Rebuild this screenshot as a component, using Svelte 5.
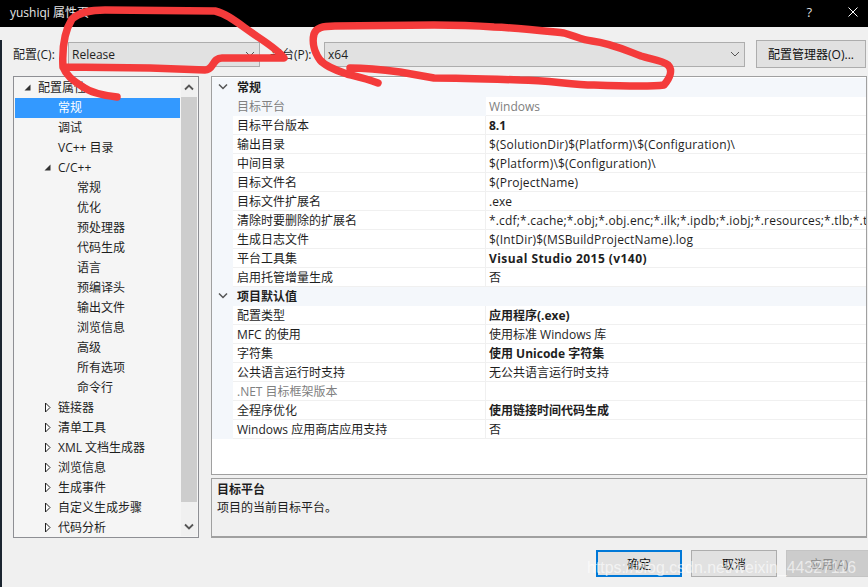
<script>
  const tree = [
    { label: "配置属性", level: 0, icon: "open" },
    { label: "常规", level: 1, selected: true },
    { label: "调试", level: 1 },
    { label: "VC++ 目录", level: 1 },
    { label: "C/C++", level: 1, icon: "open" },
    { label: "常规", level: 2 },
    { label: "优化", level: 2 },
    { label: "预处理器", level: 2 },
    { label: "代码生成", level: 2 },
    { label: "语言", level: 2 },
    { label: "预编译头", level: 2 },
    { label: "输出文件", level: 2 },
    { label: "浏览信息", level: 2 },
    { label: "高级", level: 2 },
    { label: "所有选项", level: 2 },
    { label: "命令行", level: 2 },
    { label: "链接器", level: 1, icon: "closed" },
    { label: "清单工具", level: 1, icon: "closed" },
    { label: "XML 文档生成器", level: 1, icon: "closed" },
    { label: "浏览信息", level: 1, icon: "closed" },
    { label: "生成事件", level: 1, icon: "closed" },
    { label: "自定义生成步骤", level: 1, icon: "closed" },
    { label: "代码分析", level: 1, icon: "closed" }
  ];

  const groups = [
    {
      title: "常规",
      rows: [
        { name: "目标平台", value: "Windows", muted: true },
        { name: "目标平台版本", value: "8.1", bold: true },
        { name: "输出目录", value: "$(SolutionDir)$(Platform)\\$(Configuration)\\", wide: true },
        { name: "中间目录", value: "$(Platform)\\$(Configuration)\\", wide: true },
        { name: "目标文件名", value: "$(ProjectName)", wide: true },
        { name: "目标文件扩展名", value: ".exe" },
        { name: "清除时要删除的扩展名", value: "*.cdf;*.cache;*.obj;*.obj.enc;*.ilk;*.ipdb;*.iobj;*.resources;*.tlb;*.tli;*.t", wide: true },
        { name: "生成日志文件", value: "$(IntDir)$(MSBuildProjectName).log", wide: true },
        { name: "平台工具集", value: "Visual Studio 2015 (v140)", bold: true, wider: true },
        { name: "启用托管增量生成", value: "否" }
      ]
    },
    {
      title: "项目默认值",
      rows: [
        { name: "配置类型", value: "应用程序(.exe)", bold: true },
        { name: "MFC 的使用", value: "使用标准 Windows 库" },
        { name: "字符集", value: "使用 Unicode 字符集", bold: true },
        { name: "公共语言运行时支持", value: "无公共语言运行时支持" },
        { name: ".NET 目标框架版本", value: "", mutedName: true },
        { name: "全程序优化", value: "使用链接时间代码生成", bold: true },
        { name: "Windows 应用商店应用支持", value: "否" }
      ]
    }
  ];
</script>

<div class="window">
  <header class="titlebar">
    <span class="title">yushiqi 属性页</span>
    <span class="help">?</span>
    <svg class="close" width="10" height="10" viewBox="0 0 10 10">
      <path d="M.5.5l9 9M9.500.5l-9 9" stroke="#fff" fill="none" />
    </svg>
  </header>

  <div class="content">
    <div class="toolbar">
      <span class="label first">配置(C):</span>
      <div class="combo config">
        <span>Release</span>
        <svg width="10" height="6" viewBox="0 0 10 6"><path d="M1 1l4 4 4-4" stroke="#555" fill="none" /></svg>
      </div>
      <span class="label second">平台(P):</span>
      <div class="combo platform">
        <span>x64</span>
        <svg width="10" height="6" viewBox="0 0 10 6"><path d="M1 1l4 4 4-4" stroke="#555" fill="none" /></svg>
      </div>
      <button class="btn manager">配置管理器(O)...</button>
    </div>

    <div class="main">
      <nav class="tree">
        <div class="tree-list">
          {#each tree as item}
            <div class="node level{item.level}" class:selected={item.selected}>
              {#if item.icon === "open"}
                <svg class="arrow" width="7" height="7" viewBox="0 0 7 7"><path d="M6.5.5v6h-6z" fill="#333" /></svg>
              {:else if item.icon === "closed"}
                <svg class="arrow" width="7" height="11" viewBox="0 0 7 11"><path d="M1.5 1l4.5 4.500-4.500 4.500z" stroke="#222" fill="#fff" /></svg>
              {/if}
              <span>{item.label}</span>
            </div>
          {/each}
        </div>
        <div class="scrollbar">
          <svg width="10" height="7" viewBox="0 0 10 7"><path d="M1 5.500l4-4 4 4" stroke="#555" stroke-width="1.800" fill="none" /></svg>
          <div class="track"><div class="thumb"></div></div>
          <svg width="10" height="7" viewBox="0 0 10 7"><path d="M1 1.500l4 4 4-4" stroke="#555" stroke-width="1.800" fill="none" /></svg>
        </div>
      </nav>

      <div class="side">
        <section class="grid">
          {#each groups as group}
            <div class="group-head">
              <svg width="10" height="7" viewBox="0 0 10 7"><path d="M1 1.500l4 4 4-4" stroke="#555" stroke-width="1.500" fill="none" /></svg>
              <b>{group.title}</b>
            </div>
            {#each group.rows as row}
              <div class="row" class:muted={row.muted}>
                <div class="name" class:grey={row.mutedName}>{row.name}</div>
                <div class="value" class:strong={row.bold} class:wide={row.wide} class:wider={row.wider}>{row.value}</div>
              </div>
            {/each}
          {/each}
        </section>

        <section class="desc">
          <b>目标平台</b>
          <span>项目的当前目标平台。</span>
        </section>
      </div>
    </div>

    <footer class="actions">
      <button class="btn ok">确定</button>
      <button class="btn">取消</button>
      <button class="btn disabled">应用(A)</button>
    </footer>
  </div>

  <svg class="scribble" width="868" height="587" viewBox="0 0 868 587">
    <path d="M117 97C100 95 90 92 83 87C72 80 66 75 63 67C62 50 64 32 72 19C80 12 90 10 105 10L215 11C228 14 240 25 258 37C270 45 280 52 284 58L222 58C212 58 214 70 205 70L150 68L63 67" />
    <path d="M378 83C365 78 355 76 347 74C335 70 325 66 320 60C314 52 312 42 314 34C316 28 322 26 335 26L434 25C460 25 480 26 494 27C520 28 545 31 564 33C575 36 582 40 592 41C610 43 625 50 641 56C650 59 662 60 668 65C673 70 670 78 664 85C650 87 620 86 594 85C570 85 550 80 520 80C490 79 460 78 434 78L400 72C385 70 365 68 350 68" />
  </svg>
  <div class="watermark">https://blog.csdn.net/weixin_44327116</div>
</div>

<style>
  :global(body) {
    margin: 0;
    background: #f0f0f0;
  }

  .window {
    position: relative;
    width: 868px;
    height: 587px;
    overflow: hidden;
    font-family: "Open Sans", "Noto Sans CJK SC", sans-serif;
    font-size: 12px;
    color: #1e1e1e;
    background: #f0f0f0;
  }

  .titlebar {
    display: flex;
    align-items: center;
    box-sizing: border-box;
    height: 27px;
    padding: 0 8px 3px 10px;
    background: #000;
    color: #e6e6e6;
  }

  .title {
    flex: 1;
  }

  .help {
    margin-right: 36px;
    font-size: 13px;
    color: #ddd;
  }

  .close {
    margin-right: 2px;
  }

  .content {
    border-left: 2px solid #1b2530;
    height: 560px;
  }

  .toolbar {
    display: flex;
    align-items: center;
    height: 28px;
    margin-top: 13px;
    padding-left: 11px;
  }

  .label {
    white-space: nowrap;
  }

  .label.first {
    width: 55px;
  }

  .label.second {
    width: 54px;
  }

  .combo {
    display: flex;
    align-items: center;
    justify-content: space-between;
    box-sizing: border-box;
    height: 25px;
    padding: 0 4px 0 3px;
    background: #e1e1e1;
    border: 1px solid #adadad;
  }

  .config {
    width: 192px;
    margin-right: 10px;
  }

  .platform {
    width: 421px;
    margin-right: 11px;
  }

  .btn {
    flex: none;
    box-sizing: border-box;
    height: 27px;
    width: 86px;
    padding: 0;
    font: inherit;
    color: #111;
    background: #e1e1e1;
    border: 1px solid #adadad;
  }

  .manager {
    width: 110px;
    height: 28px;
  }

  .main {
    display: flex;
    gap: 12px;
    height: 462px;
    margin-top: 8px;
    margin-left: 11px;
    margin-right: 1px;
  }

  .tree {
    display: flex;
    box-sizing: border-box;
    width: 186px;
    padding: 1px;
    background: #f5f5f5;
    border: 1px solid #8e8f94;
  }

  .tree-list {
    flex: 1;
    overflow: hidden;
  }

  .node {
    position: relative;
    display: flex;
    align-items: center;
    box-sizing: border-box;
    height: 20px;
    padding-bottom: 2px;
    white-space: nowrap;
  }

  .level0 {
    padding-left: 23px;
  }

  .level1 {
    padding-left: 43px;
  }

  .level2 {
    padding-left: 62px;
  }

  .node.selected {
    background: #3399ff;
    color: #fff;
  }

  .arrow {
    position: absolute;
    margin-left: -14px;
  }

  .scrollbar {
    display: flex;
    flex-direction: column;
    align-items: center;
    width: 16px;
    margin-left: 1px;
    background: #f0f0f0;
  }

  .scrollbar > svg {
    flex: none;
    margin: 6px 0;
  }

  .track {
    flex: 1;
    width: 100%;
  }

  .thumb {
    height: 405px;
    background: #cdcdcd;
  }

  .side {
    flex: 1;
    display: flex;
    flex-direction: column;
    min-width: 0;
    gap: 3px;
  }

  .grid {
    box-sizing: border-box;
    height: 399px;
    padding-top: 1px;
    overflow: hidden;
    background: #fff;
    border: 1px solid #a0a0a0;
  }

  .group-head {
    display: flex;
    align-items: center;
    box-sizing: border-box;
    height: 19px;
    padding: 0 0 2px 6px;
    background: #f4f7fb;
  }

  .group-head b {
    margin-left: 9px;
  }

  .row {
    display: flex;
    box-sizing: border-box;
    height: 19px;
    line-height: 19px;
    padding-left: 21px;
    background: #f4f7fb;
    white-space: nowrap;
  }

  .name {
    box-sizing: border-box;
    width: 253px;
    flex: none;
    padding-left: 4px;
    background: #fff;
    border-bottom: 1px solid #f0f0f0;
    border-right: 1px solid #f0f0f0;
  }

  .value {
    flex: 1;
    min-width: 0;
    padding-left: 3px;
    overflow: hidden;
    background: #fff;
    border-bottom: 1px solid #f0f0f0;
  }

  .strong {
    font-weight: 700;
  }

  .wide {
    letter-spacing: 0.18px;
  }

  .wider {
    letter-spacing: 0.44px;
  }

  .row.muted .name {
    color: #808080;
    background: #f4f7fb;
    border-color: #f4f7fb;
  }

  .row.muted .value {
    color: #808080;
  }

  .name.grey {
    color: #808080;
  }

  .desc {
    display: flex;
    flex-direction: column;
    box-sizing: border-box;
    height: 60px;
    padding: 2px 5px;
    line-height: 18px;
    background: #f0f0f0;
    border: 1px solid #a0a0a0;
    border-bottom-width: 2px;
  }

  .actions {
    display: flex;
    gap: 9px;
    margin-top: 12px;
    margin-left: 594px;
  }

  .ok {
    border: 2px solid #0078d7;
  }

  .disabled {
    background: #cccccc;
    border-color: #c4c4c4;
    color: #8a8a8a;
  }

  .scribble {
    position: absolute;
    top: 0;
    left: 0;
    pointer-events: none;
  }

  .scribble path {
    fill: none;
    stroke: #f43b3b;
    stroke-width: 7.500;
    stroke-linecap: round;
    stroke-linejoin: round;
  }

  .watermark {
    position: absolute;
    left: 587px;
    top: 559px;
    font-family: "Liberation Sans", sans-serif;
    font-size: 15.900px;
    white-space: nowrap;
    color: rgba(255, 255, 255, 0.62);
  }
</style>
